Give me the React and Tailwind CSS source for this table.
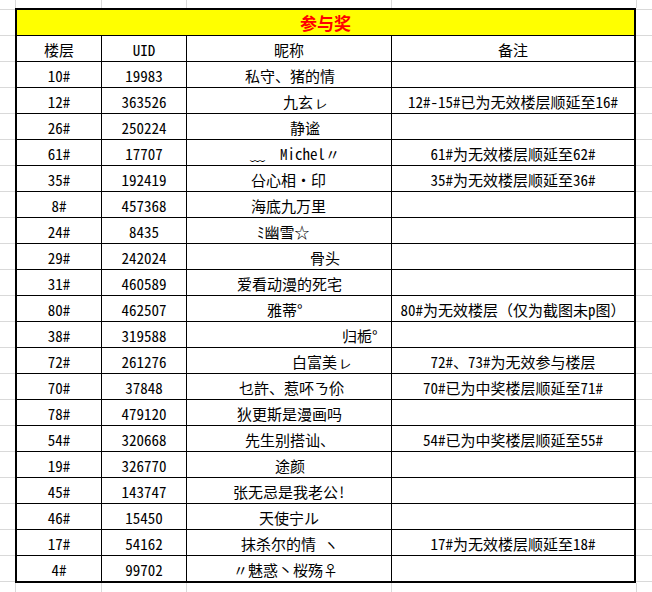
import React from 'react';

const rows = [
  { floor: '10#', uid: '19983', nick: '私守、猪的情', pl: 58, note: '' },
  { floor: '12#', uid: '363526', nick: '九玄ㇾ', pl: 96, note: '12#-15#已为无效楼层顺延至16#' },
  { floor: '26#', uid: '250224', nick: '静谧', pl: 103, note: '' },
  { floor: '61#', uid: '17707', nick: '﹏  Michel〃', pl: 63, note: '61#为无效楼层顺延至62#' },
  { floor: '35#', uid: '192419', nick: '㕣心相・印', pl: 64, note: '35#为无效楼层顺延至36#' },
  { floor: '8#', uid: '457368', nick: '海底九万里', pl: 64, note: '' },
  { floor: '24#', uid: '8435', nick: 'ﾐ幽雪☆', pl: 70, note: '' },
  { floor: '29#', uid: '242024', nick: '骨头', pl: 123, note: '' },
  { floor: '31#', uid: '460589', nick: '爱看动漫的死宅', pl: 50, note: '' },
  { floor: '80#', uid: '462507', nick: '雅蒂°', pl: 80, note: '80#为无效楼层（仅为截图未p图）' },
  { floor: '38#', uid: '319588', nick: '归栀°', pl: 155, note: '' },
  { floor: '72#', uid: '261276', nick: '白富美ㇾ', pl: 105, note: '72#、73#为无效参与楼层' },
  { floor: '70#', uid: '37848', nick: '乜許、惹吥ㄋ伱', pl: 52, note: '70#已为中奖楼层顺延至71#' },
  { floor: '78#', uid: '479120', nick: '狄更斯是漫画吗', pl: 50, note: '' },
  { floor: '54#', uid: '320668', nick: '先生别搭讪、', pl: 58, note: '54#已为中奖楼层顺延至55#' },
  { floor: '19#', uid: '326770', nick: '途颜', pl: 88, note: '' },
  { floor: '45#', uid: '143747', nick: '张无忌是我老公!', pl: 46, note: '' },
  { floor: '46#', uid: '15450', nick: '天使宁ル', pl: 72, note: '' },
  { floor: '17#', uid: '54162', nick: '抹杀尔的情 ヽ', pl: 54, note: '17#为无效楼层顺延至18#' },
  { floor: '4#', uid: '99702', nick: '〃魅惑丶桜殇♀', pl: 46, note: '' },
];

const GridStrip = ({ h }) => (
  <div className={`flex ${h}`}>
    <div className="w-[16px] border-r border-[#d9d9d9]" />
    <div className="w-[86px] border-r border-[#d9d9d9]" />
    <div className="w-[85px] border-r border-[#d9d9d9]" />
    <div className="w-[205px] border-r border-[#d9d9d9]" />
    <div className="w-[245px] border-r border-[#d9d9d9]" />
  </div>
);

const MarginLines = ({ w }) => (
  <div className={`${w} flex flex-col`}>
    <div className="h-[2px] border-b border-[#d9d9d9]" />
    {Array.from({ length: 22 }).map((_, i) => (
      <div key={i} className="h-[26px] shrink-0 border-b border-[#d9d9d9]" />
    ))}
  </div>
);

const App = () => {
  return (
    <div className="w-[652px] h-[592px] bg-white overflow-hidden text-black text-[15px] leading-none font-['Noto_Sans_Mono_CJK_SC','Noto_Sans_CJK_SC',monospace]">
      <GridStrip h="h-[8px]" />

      <div className="flex">
        <MarginLines w="w-[15px]" />

        {/* table */}
        <div className="w-[621px] border-2 border-black">
          <div className="h-[26px] border-b border-black bg-[#ffff00] flex items-center justify-center">
            <span className="text-[#ff0000] font-bold text-[17px]">参与奖</span>
          </div>

          <div className="h-[26px] border-b border-black flex">
            <div className="w-[85px] border-r border-black flex items-center justify-center pt-[2px]">楼层</div>
            <div className="w-[85px] border-r border-black flex items-center justify-center pt-[2px]">UID</div>
            <div className="w-[205px] border-r border-black flex items-center justify-center pt-[2px]">昵称</div>
            <div className="flex-1 flex items-center justify-center pt-[2px]">备注</div>
          </div>

          {rows.map((r, i) => (
            <div
              key={r.floor}
              className={i === rows.length - 1 ? 'h-[25px] flex' : 'h-[26px] border-b border-black flex'}
            >
              <div className="w-[85px] border-r border-black flex items-center justify-center pt-[2px]">{r.floor}</div>
              <div className="w-[85px] border-r border-black flex items-center justify-center pt-[2px]">{r.uid}</div>
              <div className="w-[205px] border-r border-black flex items-center pt-[2px] whitespace-pre overflow-hidden">
                <span style={{ paddingLeft: r.pl }}>{r.nick}</span>
              </div>
              <div className="flex-1 flex items-center justify-center pt-[2px] whitespace-pre">{r.note}</div>
            </div>
          ))}
        </div>

        <MarginLines w="flex-1" />
      </div>

      <GridStrip h="h-[12px]" />
    </div>
  );
};

export default App;
